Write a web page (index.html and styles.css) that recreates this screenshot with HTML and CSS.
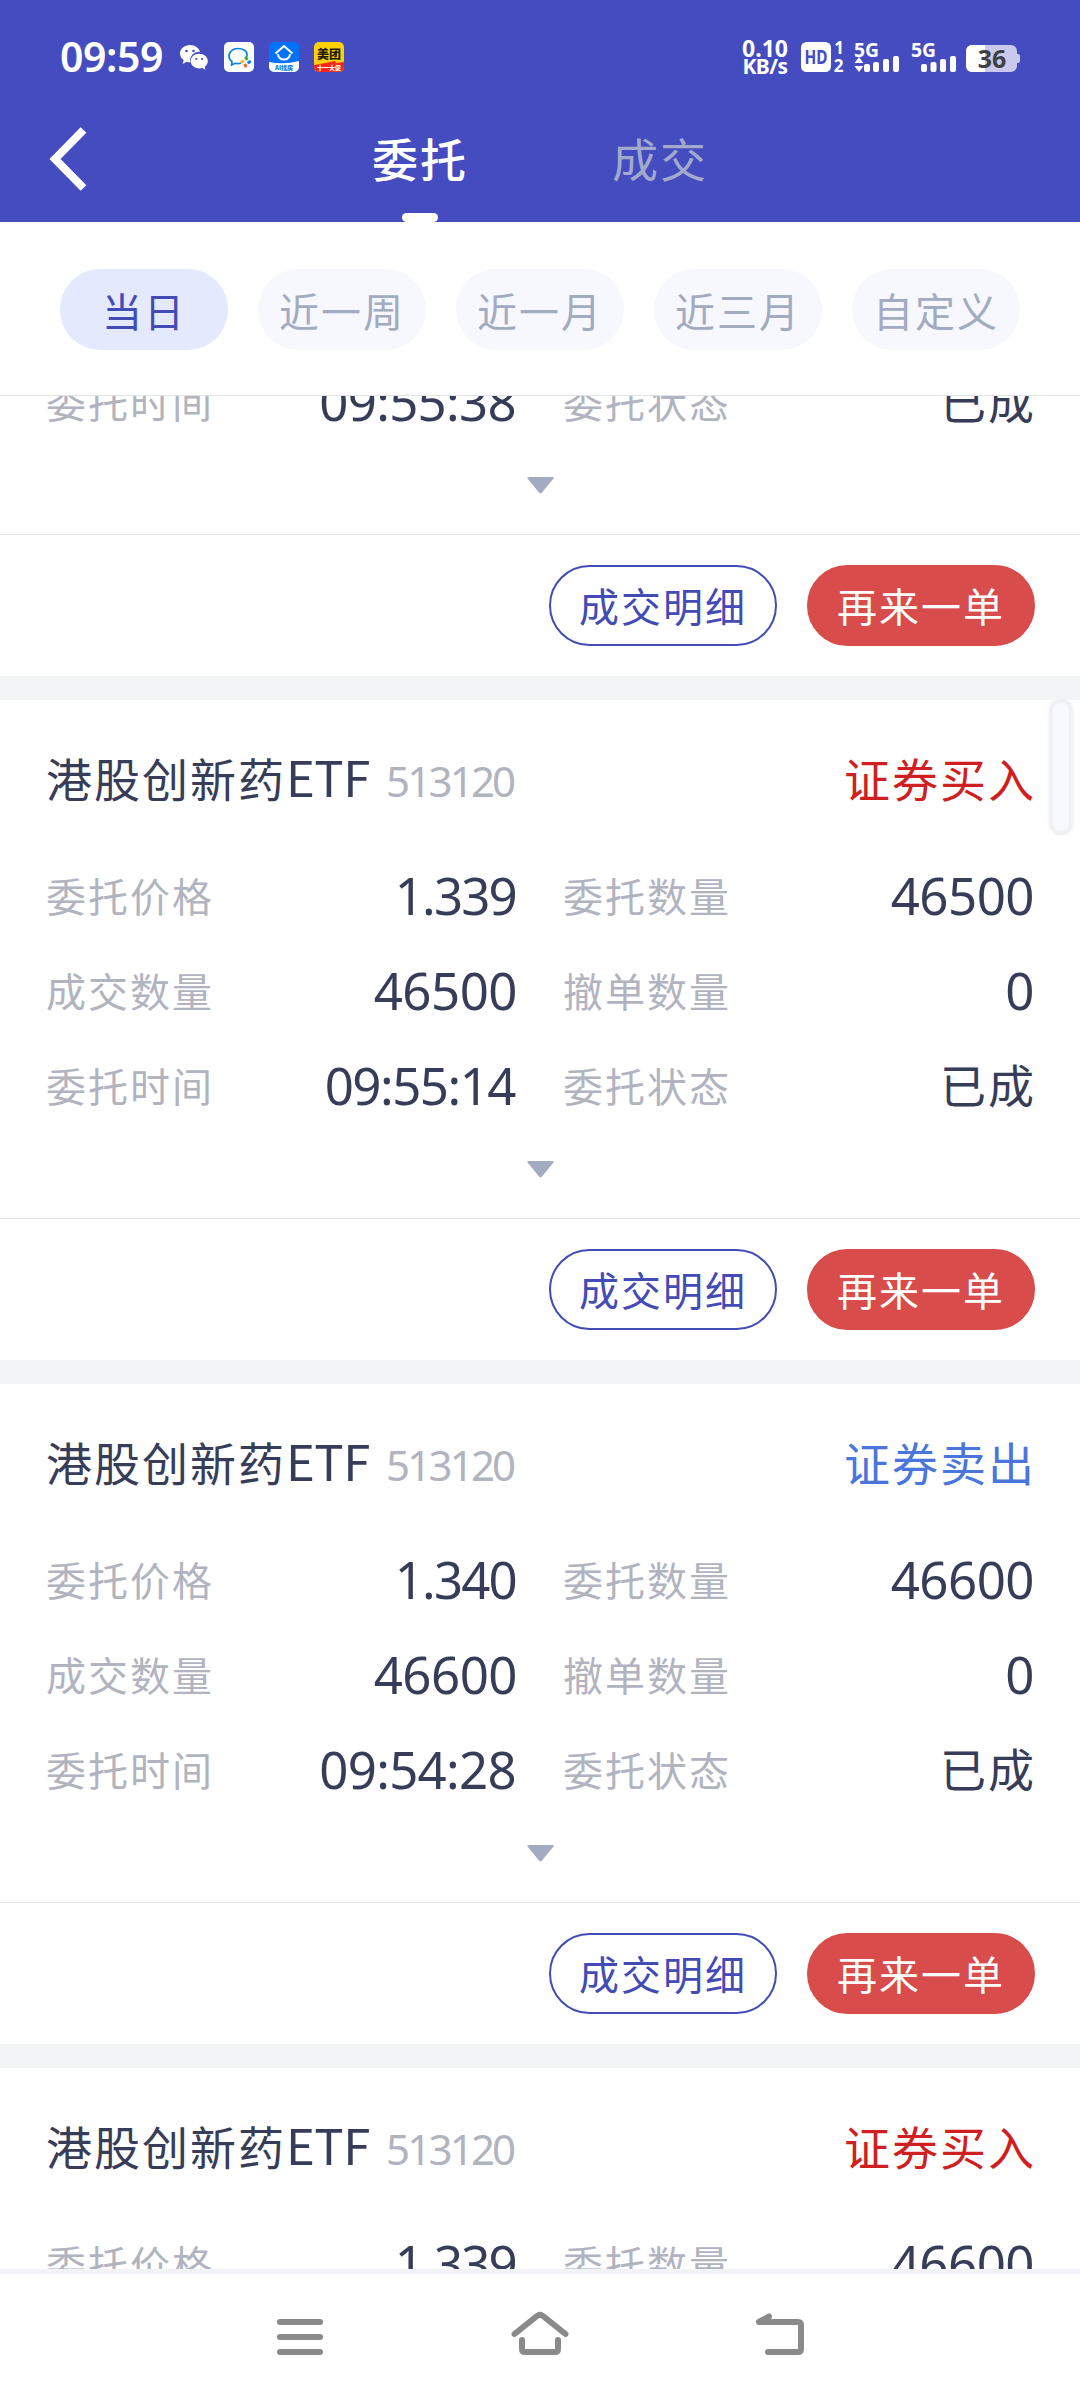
FILE: index.html
```html
<!DOCTYPE html>
<html lang="zh-CN">
<head>
<meta charset="utf-8">
<title>委托</title>
<link rel="stylesheet" href="styles.css">
</head>
<body>
<div class="screen">
  <header class="header">
    <div class="status">
      <span class="clock">09:59</span>
      <svg class="app wechat" viewBox="0 0 30 30"><path fill="#fff" d="M11 3C5.500 3 1 6.700 1 11.400c0 2.700 1.400 5 3.700 6.500L3.600 22l4-2.300c1.300.4 2.400.5 3.700.5-1.300-5.800 4-10.700 9.700-10.400C20 5.800 15.800 3 11 3z"/><path fill="#fff" d="M28.800 19c0-4.200-4-7.300-8.600-7.300s-8.500 3.100-8.500 7.300 3.900 7.400 8.500 7.400c1 0 2-.2 3-.5l3.300 1.900-.8-3.100c1.900-1.400 3.100-3.400 3.100-5.700z"/><g fill="#444cbf"><circle cx="7.500" cy="9" r="1.300"/><circle cx="14.500" cy="9" r="1.300"/><circle cx="17.300" cy="17" r="1.100"/><circle cx="23" cy="17" r="1.100"/></g></svg>
      <svg class="app" viewBox="0 0 30 30"><rect width="30" height="30" rx="5" fill="#fff"/><path d="M22.500 15.500C24.500 10 20.300 6.500 13.800 6.500 8.800 6.500 5 9.800 5 14c0 2.400 1.100 4.300 3 5.600L7.600 23l3.400-1.700c2 .6 4 .5 6 0" fill="none" stroke="#0a82da" stroke-width="1.700"/><g stroke-width="3" stroke-linecap="round"><path d="M21.800 15.800l.8 1" stroke="#3aae3c"/><path d="M25.700 19.800l-1 .6" stroke="#0a82da"/><path d="M21.600 24l-.5-1" stroke="#f4632a"/><path d="M17.800 19.900l1-.7" stroke="#fbbd0b"/></g></svg>
      <svg class="app" viewBox="0 0 30 30"><rect width="30" height="30" rx="5" fill="#0072fb"/><path d="M0 20Q15 23 30 19v6a5 5 0 0 1-5 5H5a5 5 0 0 1-5-5z" fill="#fff"/><path d="M6.500 11.500L15 4l8.500 7.500M9 12a6 5.500 0 0 0 12 0" fill="none" stroke="#fff" stroke-width="2"/><text class="t-beike" x="15" y="28" text-anchor="middle">AI找房</text></svg>
      <svg class="app" viewBox="0 0 30 30"><rect width="30" height="30" rx="5" fill="#ffd005"/><path d="M0 23l14-2.500 7-1.500 1 2 8-1v5a5 5 0 0 1-5 5H5a5 5 0 0 1-5-5z" fill="#f8261c"/><text class="t-mt" x="15" y="16.500" text-anchor="middle">美团</text><text class="t-sale" x="15" y="28" text-anchor="middle">十一大促</text></svg>
      <div class="speed"><span>0.10</span><span>KB/s</span></div>
      <svg class="signal" viewBox="800 40 222 36">
        <rect x="801" y="42" width="30" height="30" rx="5.500" fill="#fff"/>
        <text class="t-hd" x="816" y="63.500" text-anchor="middle" textLength="23" lengthAdjust="spacingAndGlyphs">HD</text>
        <text class="t-sim" x="839" y="54" text-anchor="middle">1</text>
        <text class="t-sim" x="838.500" y="71.500" text-anchor="middle">2</text>
        <text class="t-5g" x="854" y="57" textLength="25" lengthAdjust="spacingAndGlyphs">5G</text>
        <text class="t-5g" x="911" y="57" textLength="25" lengthAdjust="spacingAndGlyphs">5G</text>
        <g fill="#fff">
          <path d="M859 57l4.500 6h-9zM859 72l4.500-6h-9z"/>
          <rect x="864" y="64" width="6" height="8" rx="2"/><rect x="873" y="62" width="6" height="10" rx="2"/><rect x="883" y="59" width="6" height="13" rx="2"/><rect x="893" y="56" width="6" height="16" rx="2"/>
          <rect x="921" y="64" width="6" height="8" rx="2"/><rect x="930.500" y="62" width="6" height="10" rx="2"/><rect x="940" y="59" width="6" height="13" rx="2"/><rect x="950" y="56" width="6" height="16" rx="2"/>
        </g>
        <path d="M972 45h39a6 6 0 0 1 6 6v3h1a2 2 0 0 1 2 2v5a2 2 0 0 1-2 2h-1v3a6 6 0 0 1-6 6h-39a6 6 0 0 1-6-6V51a6 6 0 0 1 6-6z" fill="#c8c9ec"/>
        <path d="M972 45h13v27h-13a6 6 0 0 1-6-6V51a6 6 0 0 1 6-6z" fill="#fff"/>
        <text class="t-batt" x="992" y="68" text-anchor="middle">36</text>
      </svg>
    </div>
    <nav class="tabs">
      <svg class="back" viewBox="0 0 40 66"><path d="M35.500 4L7 33l28.500 29" fill="none" stroke="#fff" stroke-width="8"/></svg>
      <span class="tab active">委托</span>
      <span class="tab">成交</span>
    </nav>
  </header>

  <div class="chips">
    <span class="chip on">当日</span><span class="chip">近一周</span><span class="chip">近一月</span><span class="chip">近三月</span><span class="chip">自定义</span>
  </div>

  <main class="list">
    <div class="track">
      <article class="card">
        <div class="title"><span class="name">港股创新药<i>ETF</i></span><span class="code">513120</span><span class="side buy">证券买入</span></div>
        <div class="grid">
          <div class="cell"><span>委托价格</span><b class="price">1.339</b></div><div class="cell"><span>委托数量</span><b>46600</b></div>
          <div class="cell"><span>成交数量</span><b>46600</b></div><div class="cell"><span>撤单数量</span><b>0</b></div>
          <div class="cell"><span>委托时间</span><b class="time">09:55:38</b></div><div class="cell"><span>委托状态</span><b class="state">已成</b></div>
        </div>
        <svg class="more" viewBox="0 0 27 17"><path d="M1.500 0h24q2 0 1 1.500L15 15.500q-1.500 2-3 0L.5 1.500Q-.5 0 1.500 0z"/></svg>
        <div class="actions"><span class="btn line">成交明细</span><span class="btn fill">再来一单</span></div>
      </article>
      <article class="card">
        <div class="title"><span class="name">港股创新药<i>ETF</i></span><span class="code">513120</span><span class="side buy">证券买入</span></div>
        <div class="grid">
          <div class="cell"><span>委托价格</span><b class="price">1.339</b></div><div class="cell"><span>委托数量</span><b>46500</b></div>
          <div class="cell"><span>成交数量</span><b>46500</b></div><div class="cell"><span>撤单数量</span><b>0</b></div>
          <div class="cell"><span>委托时间</span><b class="time narrow">09:55:14</b></div><div class="cell"><span>委托状态</span><b class="state">已成</b></div>
        </div>
        <svg class="more" viewBox="0 0 27 17"><path d="M1.500 0h24q2 0 1 1.500L15 15.500q-1.500 2-3 0L.5 1.500Q-.5 0 1.500 0z"/></svg>
        <div class="actions"><span class="btn line">成交明细</span><span class="btn fill">再来一单</span></div>
      </article>
      <article class="card">
        <div class="title"><span class="name">港股创新药<i>ETF</i></span><span class="code">513120</span><span class="side sell">证券卖出</span></div>
        <div class="grid">
          <div class="cell"><span>委托价格</span><b class="price">1.340</b></div><div class="cell"><span>委托数量</span><b>46600</b></div>
          <div class="cell"><span>成交数量</span><b>46600</b></div><div class="cell"><span>撤单数量</span><b>0</b></div>
          <div class="cell"><span>委托时间</span><b class="time">09:54:28</b></div><div class="cell"><span>委托状态</span><b class="state">已成</b></div>
        </div>
        <svg class="more" viewBox="0 0 27 17"><path d="M1.500 0h24q2 0 1 1.500L15 15.500q-1.500 2-3 0L.5 1.500Q-.5 0 1.500 0z"/></svg>
        <div class="actions"><span class="btn line">成交明细</span><span class="btn fill">再来一单</span></div>
      </article>
      <article class="card">
        <div class="title"><span class="name">港股创新药<i>ETF</i></span><span class="code">513120</span><span class="side buy">证券买入</span></div>
        <div class="grid">
          <div class="cell"><span>委托价格</span><b class="price">1.339</b></div><div class="cell"><span>委托数量</span><b>46600</b></div>
        </div>
      </article>
    </div>
  </main>
  <div class="handle"></div>

  <footer class="nav">
    <svg viewBox="0 0 60 60"><path d="M10 15h40M10 30h40M10 45h40"/></svg>
    <svg viewBox="0 0 60 60"><path d="M4.500 27L27 9q3-2.400 6 0l22.500 18M12 33v9q0 3 3 3h30q3 0 3-3v-9"/></svg>
    <svg viewBox="0 0 60 60"><path d="M19 9.500L9 15h39q3 0 3 3v24q0 3-3 3H18"/></svg>
  </footer>
</div>
</body>
</html>
```
FILE: styles.css
```css
* { box-sizing: border-box; }
body { margin: 0; background: #fff; font-family: "Noto Sans", "Noto Sans CJK SC", sans-serif; }
svg { display: block; flex: none; overflow: visible; }

.screen { position: relative; width: 1080px; height: 2400px; overflow: hidden; display: flex; flex-direction: column; background: #fff; }

/* header */
.header { height: 222px; flex: none; background: #444cbf; color: #fff; display: flex; flex-direction: column; }
.status { height: 114px; padding: 0 58px 0 60px; display: flex; align-items: center; }
.clock { width: 119px; font: 600 41px/50px "Noto Sans", sans-serif; letter-spacing: -0.400px; margin-top: -2px; }
.app { width: 30px; height: 30px; margin-right: 15px; }
.speed { margin-left: auto; width: 50px; margin-right: 10px; display: flex; flex-direction: column; align-items: center; font: 700 23px/18px "Noto Sans", sans-serif; white-space: nowrap; }
.speed span:last-child { font-size: 21px; letter-spacing: -0.500px; }
.signal { width: 222px; height: 36px; margin-top: 1px; }
.signal text { font-family: "Noto Sans", sans-serif; font-weight: 700; fill: #fff; }
.signal .t-hd { font-size: 19px; fill: #444cbf; }
.signal .t-sim { font-size: 17px; }
.signal .t-5g { font-size: 20px; }
.signal .t-batt { font-size: 25px; fill: #3f4043; }
.app text { font-family: "Noto Sans CJK SC", sans-serif; font-weight: 900; }
.t-beike { font-size: 6px; fill: #0a72e8; }
.t-mt { font-size: 12px; fill: #1c1a08; }
.t-sale { font-size: 6px; fill: #fff; }

.tabs { height: 108px; padding-left: 48px; display: flex; }
.back { width: 40px; height: 66px; margin: 12px 266px 0 0; }
.tab { width: 132px; height: 108px; margin-right: 108px; display: flex; flex-direction: column; align-items: center; justify-content: space-between; font: 400 46px/87px "Noto Sans CJK SC", sans-serif; letter-spacing: 2px; color: #a2aacc; }
.tab.active { color: #fff; font-weight: 500; }
.tab.active::after { content: ""; width: 36px; height: 9px; border-radius: 5px; background: #fff; }

/* date range */
.chips { height: 174px; flex: none; padding: 47px 60px 0; display: flex; gap: 30px; border-bottom: 1px solid #e2e3e5; }
.chip { width: 168px; height: 81px; border-radius: 40px; background: #f7f8fd; color: #a2abbf; font: 400 40px/82px "Noto Sans CJK SC", sans-serif; letter-spacing: 2px; text-align: center; white-space: nowrap; }
.chip.on { background: #e4e9fe; color: #434cb5; }

/* orders */
.list { height: 1873px; flex: none; overflow: hidden; }
.track { margin-top: -380px; }
.card { height: 684px; border-bottom: 24px solid #f2f4f6; display: flex; flex-direction: column; font-family: "Noto Sans CJK SC", sans-serif; color: #373d58; }
.title { height: 149px; padding: 41px 46px 0 46px; display: flex; align-items: baseline; line-height: 70px; white-space: nowrap; }
.name { font-size: 46px; letter-spacing: 2px; width: 340px; }
.name i { font-style: normal; font-size: 49px; letter-spacing: -0.500px; }
.code { font: 400 42px/70px "Noto Sans", sans-serif; letter-spacing: -2.800px; color: #b1b4bf; }
.side { margin-left: auto; font-size: 46px; letter-spacing: 2px; margin-right: -2px; }
.buy { color: #d01f20; }
.sell { color: #4a76dc; }
.grid { height: 312px; padding: 0 46px; display: grid; grid-template-columns: 1fr 1fr; grid-auto-rows: 95px; column-gap: 46px; }
.cell { display: flex; justify-content: space-between; align-items: center; height: 91px; }
.cell span { font-size: 40px; line-height: 60px; letter-spacing: 2px; color: #b1b4bf; }
.cell b { font: 400 51px/70px "Noto Sans", sans-serif; letter-spacing: -0.500px; }
.cell .price { letter-spacing: -1.800px; margin-right: 1px; }
.cell .time { letter-spacing: -0.700px; margin-right: 1px; }
.cell .narrow { letter-spacing: -1.500px; margin-right: 2px; }
.cell .state { font: 400 46px/70px "Noto Sans CJK SC", sans-serif; letter-spacing: 2px; margin: -4px -2px 0 0; }
.more { width: 27px; height: 17px; margin: 0 auto; fill: #a2abbf; }
.actions { margin-top: 40px; height: 142px; padding: 30px 45px 0; border-top: 1px solid #e2e3e5; display: flex; justify-content: flex-end; gap: 30px; }
.btn { width: 228px; height: 81px; border-radius: 41px; border: 2px solid #434cb5; font-size: 40px; line-height: 77px; letter-spacing: 2px; text-align: center; white-space: nowrap; }
.line { color: #434cb5; }
.fill { background: #d84c4b; border-color: #d84c4b; color: #fff; }

/* floating edge handle */
.handle { position: absolute; left: 1049px; top: 699px; width: 24px; height: 136px; border: 4px solid #f0f1f2; border-radius: 12px; background: #f8f9fe; box-shadow: 0 0 4px #f0f1f2; }

/* system navigation */
.nav { height: 131px; flex: none; border-top: 5px solid #f2f3f7; display: flex; justify-content: center; gap: 180px; padding-top: 33px; }
.nav svg { width: 60px; height: 60px; fill: none; stroke: #8a8a8a; stroke-width: 6; stroke-linecap: round; stroke-linejoin: round; }
```
